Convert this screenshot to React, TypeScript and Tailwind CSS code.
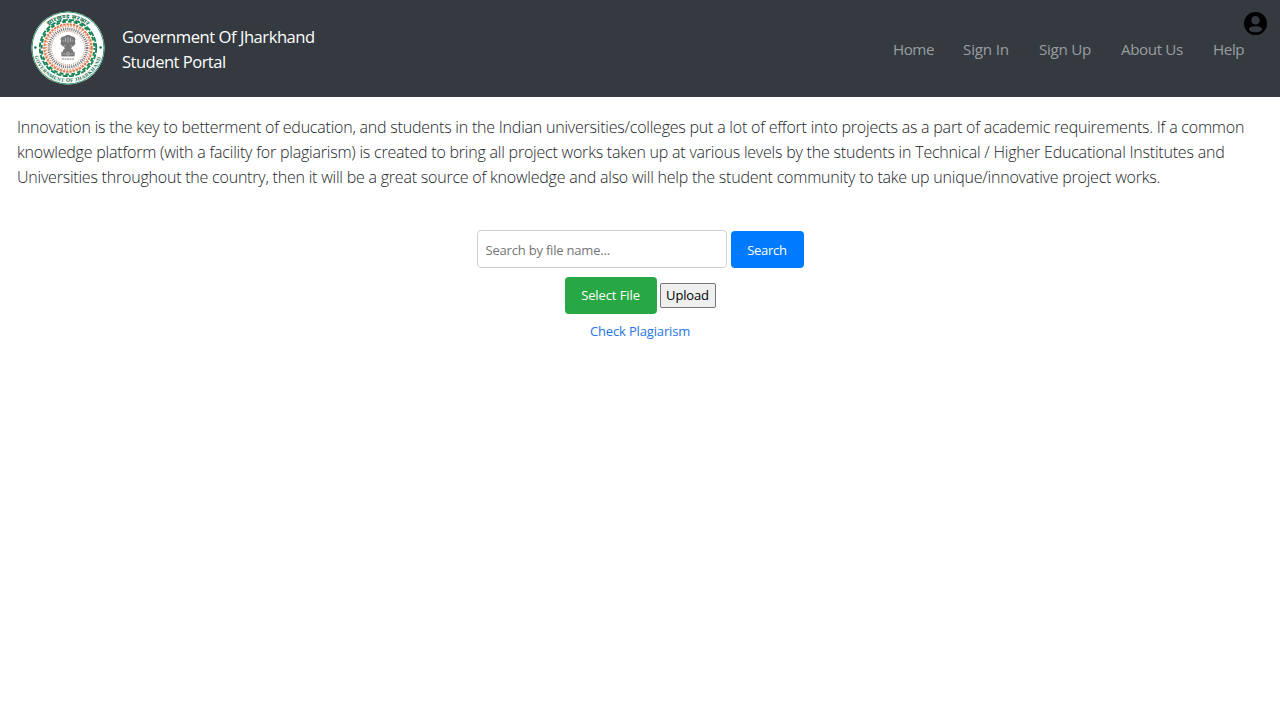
import React from "react";

const introduction = [
  { text: "Innovation is the key to betterment of education, and students in the Indian universities/colleges put a lot of effort into projects as a part of academic requirements. If a common", spacing: "tracking-[-0.217px]" },
  { text: "knowledge platform (with a facility for plagiarism) is created to bring all project works taken up at various levels by the students in Technical / Higher Educational Institutes and", spacing: "tracking-[-0.208px]" },
  { text: "Universities throughout the country, then it will be a great source of knowledge and also will help the student community to take up unique/innovative project works.", spacing: "tracking-[-0.213px]" },
];

const links = [
  { label: "Home", width: "w-[40px]", spacing: "tracking-[-0.5px]" },
  { label: "Sign In", width: "w-[46px]", spacing: "tracking-[-0.2px]" },
  { label: "Sign Up", width: "w-[52px]", spacing: "tracking-[-0.3px]" },
  { label: "About Us", width: "w-[62px]", spacing: "tracking-[-0.4px]" },
  { label: "Help", width: "w-[31px]", spacing: "tracking-[-0.4px]" },
];

function Seal() {
  return (
    <svg viewBox="0 0 74 74" className="h-[74px] w-[74px] shrink-0" aria-label="Government seal">
      <defs>
        <path id="seal-bottom" d="M2.6 37a34.4 34.4 0 0 0 68.8 0" />
        <path id="seal-top" d="M7.5 37a29.5 29.5 0 0 1 59 0" />
      </defs>
      <circle cx="37" cy="37" r="36.6" fill="#fff" />
      <circle cx="37" cy="37" r="36" fill="none" stroke="#238b5c" strokeWidth="0.9" />
      <circle cx="37" cy="37" r="28.2" fill="none" stroke="#168453" strokeWidth="1.8" strokeDasharray="5 1.37" />
      <circle cx="37" cy="37" r="26.4" fill="none" stroke="#168453" strokeWidth="2" strokeDasharray="3.8 2.17" strokeDashoffset="1.8" />
      <circle cx="37" cy="37" r="23.6" fill="none" stroke="#e07c50" strokeWidth="2.2" strokeDasharray="2.4 .9" />
      <circle cx="37" cy="37" r="21.6" fill="none" stroke="#e8a080" strokeWidth="1.6" strokeDasharray="1.4 1.4" />
      <circle cx="37" cy="37" r="19" fill="none" stroke="#77777c" strokeWidth="2.8" strokeDasharray="1.1 1" />
      <circle cx="37" cy="37" r="16.7" fill="none" stroke="#c98068" strokeWidth="0.9" strokeDasharray="1 1" />
      <g fill="#77777b">
        <path d="M33.7 25.2c1.3-1.5 5.3-1.5 6.6 0l3 .8 1.3 2.2-.8 1.5.7 3-2.2 2.6-3.3 1h-4l-3.3-1-2.2-2.6.7-3-.8-1.5 1.3-2.2z" />
        <path d="M33 35.5h8l-.8 2.3 1.8 1.2v4H32v-4l1.8-1.2z" />
        <path d="M30.4 40.8h13.2v4.6H30.4z" />
      </g>
      <path d="M34.5 27v4m2.5-5v6m2.5-5v4M31.7 30h1.5m7.6 0h1.5M33 34l1.5 1m6.5-1-1.5 1M32 43h2.7m4.6 0H42" stroke="#c8c8ca" strokeWidth="0.7" />
      <circle cx="37" cy="42.8" r="1.4" fill="none" stroke="#ddd" strokeWidth="0.6" />
      <path d="M31 48h12" stroke="#85858a" strokeWidth="1" strokeDasharray="2 .5" />
      <circle cx="4.4" cy="36.5" r="1.2" fill="#146b49" />
      <circle cx="69.6" cy="36.5" r="1.2" fill="#146b49" />
      <text fill="#126c48" fontSize="5.2" fontWeight="700" fontFamily="Liberation Serif, serif">
        <textPath href="#seal-bottom" startOffset="8" textLength="90">GOVERNMENT OF JHARKHAND</textPath>
      </text>
      <text fill="#126c48" fontSize="6" fontWeight="700" fontFamily="Noto Sans, sans-serif">
        <textPath href="#seal-top" startOffset="25.3" textLength="42">झारखण्ड सरकार</textPath>
      </text>
    </svg>
  );
}

export default function App() {
  return (
    <div className="min-h-screen bg-white font-['Open_Sans',sans-serif] text-[#212529]">
      <header className="relative flex h-[97px] items-center justify-between bg-[#343a40] pb-px pl-[31px] pr-[36px]">
        <div className="flex items-center gap-[17px]">
          <Seal />
          <div className="pt-[2px] text-[16.6px] leading-[25px] text-white">
            <p className="whitespace-nowrap tracking-[-0.47px]">Government Of Jharkhand</p>
            <p className="whitespace-nowrap tracking-[-0.54px]">Student Portal</p>
          </div>
        </div>
        <nav className="flex gap-[30px] pt-[2px] text-[15.2px] leading-6 text-[#9a9da0]">
          {links.map((link) => (
            <a key={link.label} href="#" className={`${link.width} ${link.spacing} whitespace-nowrap`}>{link.label}</a>
          ))}
        </nav>
        <button aria-label="Account" className="absolute right-[13px] top-[12px]">
          <svg viewBox="2 2 20 20" className="h-[23px] w-[23px]">
            <path fill="#000" fillRule="evenodd" d="M12 2a10 10 0 1 0 0 20 10 10 0 0 0 0-20zm0 3.5a3.7 3.7 0 1 1 0 7.4 3.7 3.7 0 0 1 0-7.4zm0 8.8c3 0 5.7 1 5.7 2.6S15 19.5 12 19.5s-5.7-1-5.7-2.6 2.7-2.6 5.7-2.6z" />
          </svg>
        </button>
      </header>
      <main>
        <div className="pl-[17px] pt-[18px] text-[16px] font-light leading-[25px]">
          {introduction.map((line) => (
            <p key={line.text} className={`whitespace-nowrap ${line.spacing}`}>{line.text}</p>
          ))}
        </div>
        <form className="mt-[40px] flex flex-col items-center text-[13px]" onSubmit={(e) => e.preventDefault()}>
          <div className="flex h-[38px] items-center gap-1">
            <input placeholder="Search by file name..." className="h-[38px] w-[250px] rounded-[4px] border border-[#ced0d2] px-2 pt-[2px] tracking-[-0.2px] placeholder:text-[#757575]" />
            <button className="h-[37px] w-[73px] rounded-[4px] bg-[#007bff] pt-[3px] tracking-[-0.25px] text-white">Search</button>
          </div>
          <div className="mt-[9px] flex h-[37px] items-center gap-[3px]">
            <button type="button" className="h-[37px] w-[92px] rounded-[4px] bg-[#28a745] tracking-[-0.1px] text-white">Select File</button>
            <button type="button" className="h-[25px] w-[56px] rounded-[2px] border border-[#767676] bg-[#efefef] leading-none tracking-[-0.15px] text-black">Upload</button>
          </div>
          <a href="#" className="mt-[7px] leading-[20px] tracking-[-0.15px] text-[#2475e5]">Check Plagiarism</a>
        </form>
      </main>
    </div>
  );
}
